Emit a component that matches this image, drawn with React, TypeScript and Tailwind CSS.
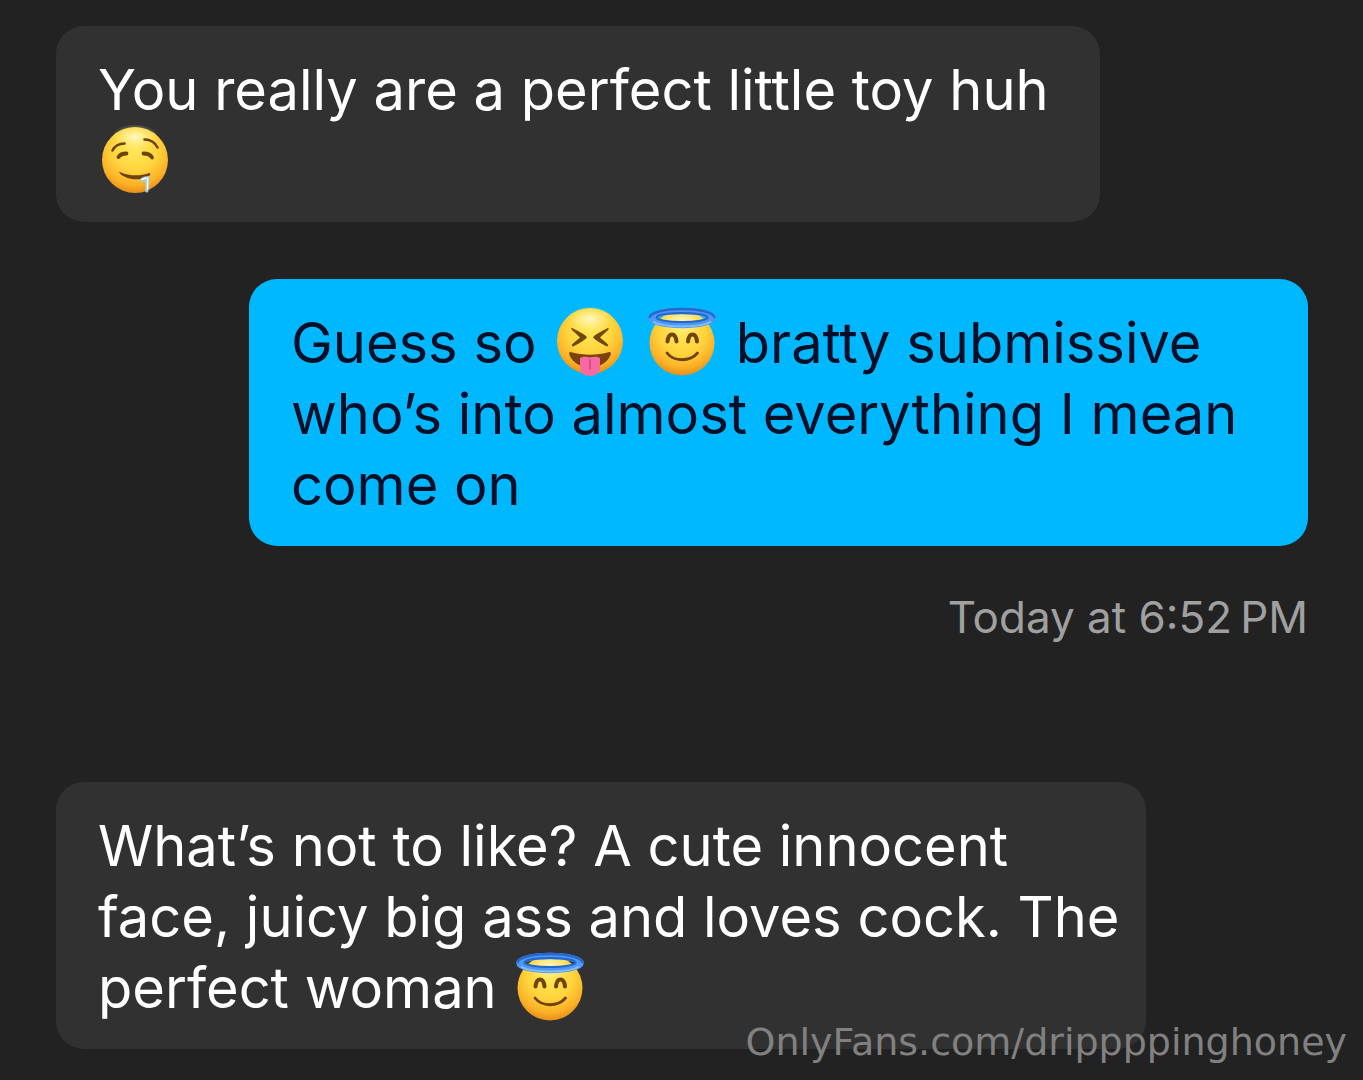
import React from "react";
import clsx from "clsx";

const FaceGradient: React.FC<{ id: string }> = ({ id }) => (
  <defs>
    <radialGradient id={id} cx="0.5" cy="0.32" r="0.7">
      <stop offset="0" stopColor="#ffe95a" />
      <stop offset="0.5" stopColor="#ffd43c" />
      <stop offset="0.8" stopColor="#fbb026" />
      <stop offset="1" stopColor="#e58a17" />
    </radialGradient>
    <radialGradient id={`${id}-shine`} cx="0.5" cy="0.5" r="0.5">
      <stop offset="0" stopColor="#fffbd0" stopOpacity="0.9" />
      <stop offset="1" stopColor="#fff3a0" stopOpacity="0" />
    </radialGradient>
  </defs>
);

const emojiClass = "inline-block size-[70px] mx-[3px] -my-2 align-[-6px]";

const DroolingFace: React.FC = () => (
  <svg viewBox="0 0 70 70" role="img" aria-label="Drooling face" className={emojiClass}>
    <FaceGradient id="drool-face" />
    <circle cx="34" cy="35" r="33" fill="url(#drool-face)" />
    <ellipse cx="34" cy="12" rx="23" ry="13" fill="url(#drool-face-shine)" />
    <g fill="none" stroke="#6b4407" strokeLinecap="round">
      <path d="M11.500 25.500C14 20.500 19 18.500 23.500 18.500" strokeWidth="2.600" />
      <path d="M43.500 14.500C49 14.500 54 17.500 56.500 22.500" strokeWidth="2.600" />
      <path d="M17.500 32C19 29.500 22 28.500 25.500 28.500" strokeWidth="3.800" />
      <path d="M42.500 28.500C46 28.500 49.500 29.500 51 32.500" strokeWidth="3.800" />
    </g>
    <path d="M19 47C27 51 39 51.500 48.500 48C49.500 48 49.500 49 49 50C44 56 26 56 19 48.500C18 47.500 18 46.500 19 47Z" fill="#70400a" />
    <path
      d="M38.500 54.500C40.500 52 44.500 51 48 51C49.500 53 48.500 58 47.500 66C47 68 45 68 44 66C44.500 62 45 58 43.500 55.500C42.500 58.500 40 58 38.500 54.500Z"
      fill="#a9c8cc"
    />
    <path d="M46.500 53V64M41 54.500L45 53" stroke="#f2fbff" strokeWidth="1.500" strokeLinecap="round" />
  </svg>
);

const SquintingTongueFace: React.FC = () => (
  <svg viewBox="0 0 70 70" role="img" aria-label="Squinting face with tongue" className={emojiClass}>
    <FaceGradient id="squint-face" />
    <circle cx="35" cy="34" r="33" fill="url(#squint-face)" />
    <ellipse cx="35" cy="12" rx="23" ry="13" fill="url(#squint-face-shine)" />
    <path
      d="M17 21.500C22 24 27 26.500 31 29.500C31.500 30 31.500 30.500 31 31C27 34.500 22 37 18 39C17 39 17 38 17.500 37.500L25.500 30.500L17 22.500C16.500 22 16.500 21.500 17 21.500ZM53 21.500C48 24 43 26.500 39 29.500C38.500 30 38.500 30.500 39 31C43 34.500 48 37 52 39C53 39 53 38 52.500 37.500L44.500 30.500L53 22.500C53.500 22 53.500 21.500 53 21.500Z"
      fill="#704709"
      stroke="#704709"
      strokeWidth="1"
      strokeLinejoin="round"
    />
    <path d="M15.500 45C28 48.500 42 48.500 54.500 45C56 45 56 46.500 55.500 48C52 56.500 44 60 35 60C26 60 18 56.500 14.500 48C14 46.500 14 45 15.500 45Z" fill="#7a420c" />
    <path d="M25 51C28 49 32 49.500 35 50.500C38 49.500 42 49 45 51V60C45 66 41 69 35 69C29 69 25 66 25 60Z" fill="#f769a3" />
    <path d="M35 53V62" stroke="#de4a88" strokeWidth="2" strokeLinecap="round" />
  </svg>
);

const HaloFace: React.FC<{ id: string }> = ({ id }) => (
  <svg viewBox="0 0 70 70" role="img" aria-label="Smiling face with halo" className={emojiClass}>
    <FaceGradient id={id} />
    <circle cx="35" cy="36" r="32.500" fill={`url(#${id})`} />
    <ellipse cx="35" cy="14" rx="24" ry="14" fill={`url(#${id}-shine)`} />
    <ellipse cx="35" cy="11" rx="30.500" ry="7" fill="none" stroke="#4e97f2" strokeWidth="6.500" />
    <ellipse cx="35" cy="10.500" rx="25.500" ry="4.500" fill="none" stroke="#2467cf" strokeWidth="2" />
    <path d="M2.500 11C3 -1 67 -1 67.500 11" fill="none" stroke="#2768d0" strokeWidth="2.400" />
    <path d="M6 14.500C15 21 55 21 64 14.500" fill="none" stroke="#83bdfa" strokeWidth="2" />
    <g fill="none" stroke="#70430a" strokeLinecap="round">
      <path d="M20.500 34.500C21.500 25 28.500 25 29.500 34.500M41 34.500C42 25 49 25 50 34.500" strokeWidth="4" />
      <path d="M20 46C27 55 43 55 50.500 46" strokeWidth="2.800" />
    </g>
  </svg>
);

const Bubble: React.FC<{
  lines: React.ReactNode[];
  sent?: boolean;
  className: string;
}> = ({ lines, sent, className }) => (
  <div
    className={clsx(
      "w-full rounded-[28px] px-[42px] pt-[29px] pb-[25px] text-[56px] leading-[71px]",
      sent ? "self-end bg-[#00b8ff] text-[#020f26]" : "bg-[#313131] text-white",
      className
    )}
  >
    {lines.map((line, i) => (
      <p key={i} className="h-[71px] whitespace-nowrap">
        {line}
      </p>
    ))}
  </div>
);

const App: React.FC = () => {
  return (
    <main className="relative flex min-h-screen flex-col overflow-hidden bg-[#222222] pt-[26px] pr-[55px] pb-[31px] pl-[56px] font-['Inter','Liberation_Sans',sans-serif]">
      <Bubble
        className="max-w-[1044px]"
        lines={["You really are a perfect little toy huh", <DroolingFace />]}
      />

      <Bubble
        sent
        className="mt-[57px] max-w-[1059px]"
        lines={[
          <>
            Guess so <SquintingTongueFace /> <HaloFace id="halo-sent" /> bratty submissive
          </>,
          "who’s into almost everything I mean",
          "come on",
        ]}
      />
      <time className="mt-[44px] self-end text-[44px] leading-[54px] text-[#a0a0a0]">
        Today at 6:52{"\u2009"}PM
      </time>

      <Bubble
        className="mt-[138px] max-w-[1090px]"
        lines={[
          "What’s not to like? A cute innocent",
          "face, juicy big ass and loves cock. The",
          <>
            perfect woman <HaloFace id="halo-received" />
          </>,
        ]}
      />

      {/* Profile watermark over the last message */}
      <span className="absolute right-[16px] bottom-[14px] font-['DejaVu_Sans',sans-serif] text-[38px] leading-[48px] text-[#818181]">
        OnlyFans.com/drippppinghoney
      </span>
    </main>
  );
};

export default App;
